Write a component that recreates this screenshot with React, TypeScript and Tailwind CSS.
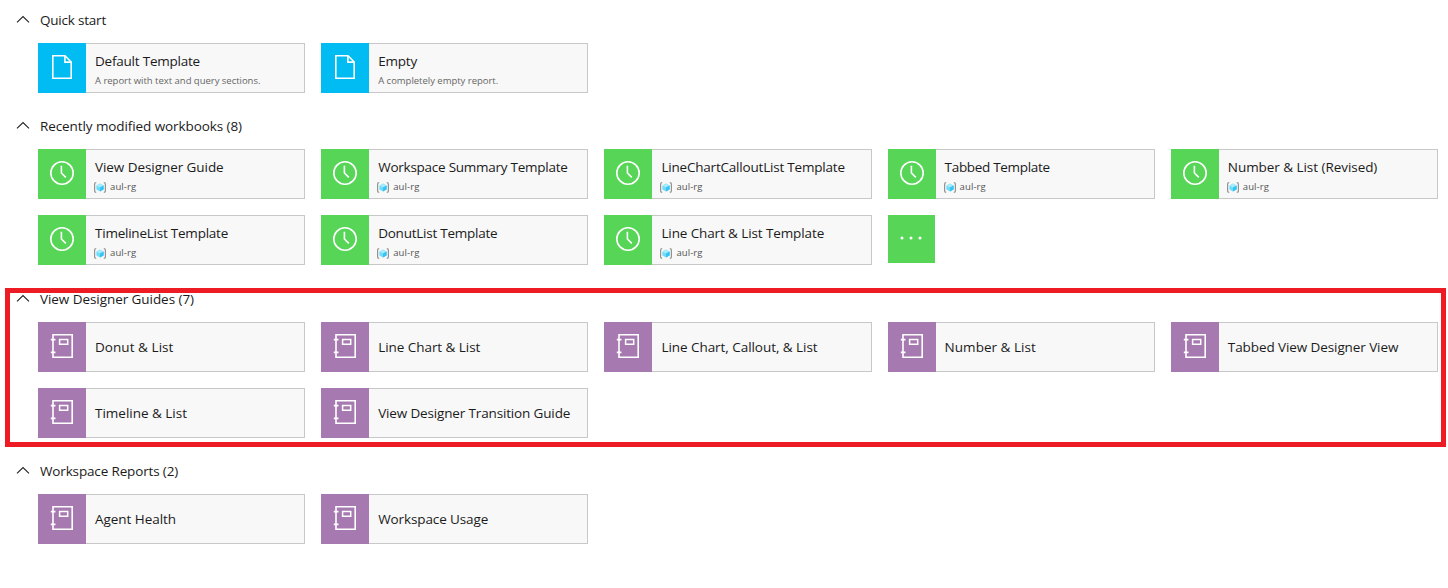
import type { ReactNode } from "react";

type Kind = "blank" | "recent" | "book";

interface Item {
  title: string;
  tracking: string;
  note?: string;
  group?: string;
}

const blankItems: Item[] = [
  { title: "Default Template", tracking: "tracking-[-0.22px]", note: "A report with text and query sections." },
  { title: "Empty", tracking: "tracking-[-0.2px]", note: "A completely empty report." },
];

const recentItems: Item[] = [
  { title: "View Designer Guide", tracking: "tracking-[-0.06px]", group: "aul-rg" },
  { title: "Workspace Summary Template", tracking: "tracking-[-0.25px]", group: "aul-rg" },
  { title: "LineChartCalloutList Template", tracking: "tracking-[-0.2px]", group: "aul-rg" },
  { title: "Tabbed Template", tracking: "tracking-[-0.32px]", group: "aul-rg" },
  { title: "Number & List (Revised)", tracking: "tracking-[-0.05px]", group: "aul-rg" },
  { title: "TimelineList Template", tracking: "tracking-[-0.23px]", group: "aul-rg" },
  { title: "DonutList Template", tracking: "tracking-[-0.24px]", group: "aul-rg" },
  { title: "Line Chart & List Template", tracking: "tracking-[-0.11px]", group: "aul-rg" },
];

const guideItems: Item[] = [
  { title: "Donut & List", tracking: "tracking-[0.05px]" },
  { title: "Line Chart & List", tracking: "tracking-[-0.05px]" },
  { title: "Line Chart, Callout, & List", tracking: "tracking-[-0.05px]" },
  { title: "Number & List", tracking: "tracking-[0.03px]" },
  { title: "Tabbed View Designer View", tracking: "tracking-[-0.09px]" },
  { title: "Timeline & List", tracking: "tracking-[-0.01px]" },
  { title: "View Designer Transition Guide", tracking: "tracking-[-0.15px]" },
];

const reportItems: Item[] = [
  { title: "Agent Health", tracking: "tracking-[-0.05px]" },
  { title: "Workspace Usage", tracking: "tracking-[-0.11px]" },
];

const tileColor: Record<Kind, string> = {
  blank: "bg-[#00bcf2]",
  recent: "bg-[#57d557]",
  book: "bg-[#a679b0]",
};

function KindIcon({ kind }: { kind: Kind }) {
  return (
    <svg width="24" height="24" viewBox="0 0 24 24" fill="none" stroke="#fff" strokeWidth="1.6" className="mt-3 shrink-0">
      {kind === "blank" && (
        <>
          <path d="M2.8 .8H15L21.2 7V23.2H2.8Z" />
          <path d="M14.9 .8V7.1H21.2" />
        </>
      )}
      {kind === "recent" && (
        <>
          <circle cx="12" cy="12" r="11.2" />
          <path d="M11.4 4.8V12L15.8 16.4" />
        </>
      )}
      {kind === "book" && (
        <>
          <path d="M3 .8H22.2V23.2H3Z" />
          <path d="M9.6 5.6H17.7V10.3H9.6Z" strokeWidth="1.5" />
          <path d="M.8 5.6H5.5M.8 18.4H5.5" strokeWidth="1.7" />
        </>
      )}
    </svg>
  );
}

function GroupIcon() {
  return (
    <svg width="12" height="11" viewBox="0 0 12 11" fill="none">
      <path d="M2.2 .7C.9 .7 .6 1 .6 2V9C.6 10 .9 10.3 2.2 10.3M9.8 .7C11.1 .7 11.4 1 11.4 2V9C11.4 10 11.1 10.3 9.8 10.3" stroke="#939393" strokeWidth="1.2" />
      <path d="M6 1.4L9.6 3.4V7.6L6 9.6L2.4 7.6V3.4Z" fill="#6fdcfa" />
      <path d="M6 1.4L9.6 3.4L6 5.4L2.4 3.4Z" fill="#a6ecfd" />
      <path d="M6 5.4L9.6 3.4V7.6L6 9.6Z" fill="#35c3f3" />
    </svg>
  );
}

function Card({ item, kind }: { item: Item; kind: Kind }) {
  const single = !item.note && !item.group;
  return (
    <div className="flex h-[50px] min-w-0">
      <div className={`flex w-12 shrink-0 justify-center ${tileColor[kind]}`}>
        <KindIcon kind={kind} />
      </div>
      <div className={`flex min-w-0 grow flex-col border border-l-0 border-[#c8c8c8] bg-[#f8f8f8] pl-[9px] ${single ? "pt-[14px]" : "pt-[7px]"}`}>
        <div className={`whitespace-nowrap text-[13.5px] leading-5 text-[#1b1b1b] ${item.tracking}`}>{item.title}</div>
        {item.note && (
          <div className="mt-[3px] whitespace-nowrap text-[9.5px] leading-[14px] tracking-[-0.02px] text-[#666]">{item.note}</div>
        )}
        {item.group && (
          <div className="mt-[3px] -ml-px flex items-center gap-1 text-[9.5px] leading-[14px] tracking-[0.1px] text-[#555]">
            <GroupIcon />
            <span>{item.group}</span>
          </div>
        )}
      </div>
    </div>
  );
}

interface SectionProps {
  title: string;
  tracking: string;
  items: Item[];
  kind: Kind;
  className: string;
  children?: ReactNode;
}

function Section({ title, tracking, items, kind, className, children }: SectionProps) {
  return (
    <section className={className}>
      <h2 className="flex h-5 items-center gap-[10px] pl-[16px]">
        <svg width="14" height="10" viewBox="0 0 14 10" fill="none" stroke="#222" strokeWidth="1.1">
          <path d="M1 7.4L7 1.5L13 7.4" />
        </svg>
        <span className={`whitespace-nowrap text-[13.5px] leading-5 text-[#1b1b1b] ${tracking}`}>{title}</span>
      </h2>
      <div className="mt-[13px] ml-[38px] grid w-[1400px] grid-cols-5 gap-4">
        {items.map((item) => (
          <Card key={item.title} item={item} kind={kind} />
        ))}
        {children}
      </div>
    </section>
  );
}

export default function App() {
  return (
    <main className="relative h-[588px] w-[1448px] overflow-hidden bg-white pt-[10px] font-['Open_Sans','Noto_Sans',sans-serif]">
      <Section title="Quick start" tracking="tracking-[-0.21px]" items={blankItems} kind="blank" className="mb-[23px]" />
      <Section title="Recently modified workbooks (8)" tracking="tracking-[-0.09px]" items={recentItems} kind="recent" className="mb-6">
        <button className="flex h-12 w-[47px] items-center justify-center bg-[#57d557]" aria-label="More">
          <svg width="24" height="4" viewBox="0 0 24 4" fill="#fff" className="-mt-[2px]">
            <circle cx="3" cy="2" r="1.5" />
            <circle cx="12" cy="2" r="1.5" />
            <circle cx="21" cy="2" r="1.5" />
          </svg>
        </button>
      </Section>
      <Section title="View Designer Guides (7)" tracking="tracking-[-0.06px]" items={guideItems} kind="book" className="mb-[23px]" />
      <Section title="Workspace Reports (2)" tracking="tracking-[-0.15px]" items={reportItems} kind="book" className="" />
      <div className="pointer-events-none absolute left-[5px] top-[288px] h-[159px] w-[1441px] border-[5px] border-[#ed1c24]" />
    </main>
  );
}
